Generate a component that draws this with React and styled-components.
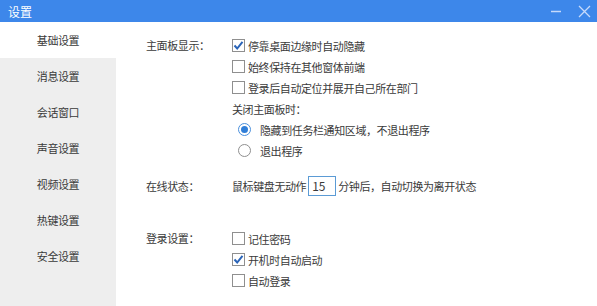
import styled, { createGlobalStyle } from "styled-components";

const GlobalStyle = createGlobalStyle`
  html, body {
    margin: 0;
    padding: 0;
    background: #fff;
  }
  body {
    font-family: "Microsoft YaHei", "Noto Sans CJK SC", sans-serif;
    font-size: 11px;
    letter-spacing: -0.4px;
    color: #3a3a3a;
  }
`;

const Window = styled.div`
  width: 597px;
  height: 306px;
  display: flex;
  flex-direction: column;
  overflow: hidden;
`;

const TitleBar = styled.div`
  height: 22px;
  flex: none;
  background: #3d87ea;
  display: flex;
  align-items: center;
  padding: 0 1px 0 8px;
  color: #fff;
  font-size: 12px;
  letter-spacing: 0;
`;

const Title = styled.div`
  flex: 1;
`;

const WinButton = styled.div`
  width: 24px;
  height: 22px;
  display: flex;
  align-items: center;
  justify-content: center;
  margin-left: ${(p) => p.gap || 0}px;
`;

const Body = styled.div`
  flex: 1;
  display: flex;
`;

const Sidebar = styled.div`
  width: 116px;
  flex: none;
  background: #eeeeee;
  display: flex;
  flex-direction: column;
`;

const NavItem = styled.div`
  height: 36px;
  display: flex;
  align-items: center;
  justify-content: center;
  background: ${(p) => (p.active ? "#fff" : "transparent")};
`;

const Content = styled.div`
  flex: 1;
  padding: 13px 0 0 30px;
`;

const Section = styled.div`
  display: grid;
  grid-template-columns: 86px 1fr;
  margin-top: ${(p) => p.top || 0}px;
`;

const Label = styled.div`
  height: ${(p) => p.h || 21}px;
  line-height: ${(p) => p.h || 21}px;
`;

const Rows = styled.div`
  display: flex;
  flex-direction: column;
`;

const Row = styled.div`
  height: ${(p) => p.h || 21}px;
  display: flex;
  align-items: center;
  padding-left: ${(p) => p.indent || 0}px;
  white-space: nowrap;
`;

const Box = styled.span`
  width: 11px;
  height: 11px;
  border: 1px solid #8f8f8f;
  background: #fff;
  margin-right: 3px;
  position: relative;
  flex: none;
`;

const Radio = styled.span`
  width: 11px;
  height: 11px;
  border: 1px solid ${(p) => (p.on ? "#4a8fdc" : "#8f8f8f")};
  border-radius: 50%;
  background: #fff;
  margin-right: 9px;
  display: flex;
  align-items: center;
  justify-content: center;
  flex: none;
`;

const Dot = styled.span`
  width: 7px;
  height: 7px;
  border-radius: 50%;
  background: #2f7ed8;
`;

const MinuteInput = styled.div`
  width: 23px;
  height: 18px;
  border: 1px solid #5b9bd5;
  margin: 0 2px 0 2px;
  padding-left: 3px;
  line-height: 18px;
  letter-spacing: 0;
  font-size: 12px;
`;

function Check({ checked, children }) {
  return (
    <Row>
      <Box>
        {checked && (
          <svg width="11" height="11" viewBox="0 0 11 11" style={{ position: "absolute", left: 0, top: 0 }}>
            <path d="M1.5 5.5 L4.2 8.5 L9.5 1.8" fill="none" stroke="#2a64b8" strokeWidth="2" />
          </svg>
        )}
      </Box>
      {children}
    </Row>
  );
}

function Option({ checked, children }) {
  return (
    <Row indent={6}>
      <Radio on={checked}>{checked && <Dot />}</Radio>
      {children}
    </Row>
  );
}

const navItems = ["基础设置", "消息设置", "会话窗口", "声音设置", "视频设置", "热键设置", "安全设置"];

export default function App() {
  return (
    <Window>
      <GlobalStyle />
      <TitleBar>
        <Title>设置</Title>
        <WinButton>
          <svg width="12" height="12" viewBox="0 0 12 12">
            <path d="M1 6.5 H11" stroke="#c6dafb" strokeWidth="1.5" />
          </svg>
        </WinButton>
        <WinButton gap={4}>
          <svg width="13" height="13" viewBox="0 0 13 13">
            <path d="M1 1 L12 12 M12 1 L1 12" stroke="#c6dafb" strokeWidth="1.3" />
          </svg>
        </WinButton>
      </TitleBar>
      <Body>
        <Sidebar>
          {navItems.map((item, i) => (
            <NavItem key={item} active={i === 0}>
              {item}
            </NavItem>
          ))}
        </Sidebar>
        <Content>
          <Section>
            <Label>主面板显示：</Label>
            <Rows>
              <Check checked>停靠桌面边缘时自动隐藏</Check>
              <Check>始终保持在其他窗体前端</Check>
              <Check>登录后自动定位并展开自己所在部门</Check>
              <Row>关闭主面板时：</Row>
              <Option checked>隐藏到任务栏通知区域，不退出程序</Option>
              <Option>退出程序</Option>
            </Rows>
          </Section>
          <Section top={14}>
            <Label h={22}>在线状态：</Label>
            <Rows>
              <Row h={22}>
                鼠标键盘无动作
                <MinuteInput>15</MinuteInput>
                分钟后，自动切换为离开状态
              </Row>
            </Rows>
          </Section>
          <Section top={31}>
            <Label>登录设置：</Label>
            <Rows>
              <Check>记住密码</Check>
              <Check checked>开机时自动启动</Check>
              <Check>自动登录</Check>
            </Rows>
          </Section>
        </Content>
      </Body>
    </Window>
  );
}
